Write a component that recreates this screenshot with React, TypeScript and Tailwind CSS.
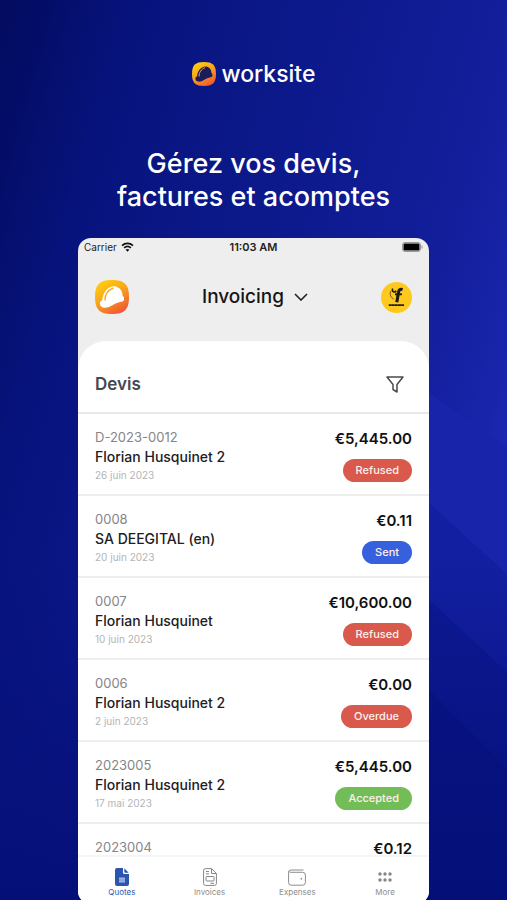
import React from "react";

type Status = "Refused" | "Sent" | "Overdue" | "Accepted";

interface Quote {
  number: string;
  client?: string;
  date?: string;
  amount: string;
  status?: Status;
}

const quotes: Quote[] = [
  { number: "D-2023-0012", client: "Florian Husquinet 2", date: "26 juin 2023", amount: "€5,445.00", status: "Refused" },
  { number: "0008", client: "SA DEEGITAL (en)", date: "20 juin 2023", amount: "€0.11", status: "Sent" },
  { number: "0007", client: "Florian Husquinet", date: "10 juin 2023", amount: "€10,600.00", status: "Refused" },
  { number: "0006", client: "Florian Husquinet 2", date: "2 juin 2023", amount: "€0.00", status: "Overdue" },
  { number: "2023005", client: "Florian Husquinet 2", date: "17 mai 2023", amount: "€5,445.00", status: "Accepted" },
  { number: "2023004", amount: "€0.12" },
];

const statusColor: Record<Status, string> = {
  Refused: "bg-[#d9594c]",
  Overdue: "bg-[#d9594c]",
  Sent: "bg-[#3660dc]",
  Accepted: "bg-[#73bd58]",
};

function HelmetLogo({ id, className, helmet }: { id: string; className: string; helmet: string }) {
  return (
    <svg viewBox="0 0 34 34" className={className} aria-hidden="true">
      <defs>
        <linearGradient id={id} x1="0.15" y1="0" x2="0.75" y2="1">
          <stop offset="0" stopColor="#fdd20b" />
          <stop offset="0.45" stopColor="#fba71c" />
          <stop offset="1" stopColor="#ee5436" />
        </linearGradient>
      </defs>
      <path d="M17 0C29 0 34 4 34 17S29 34 17 34 0 30 0 17 5 0 17 0Z" fill={`url(#${id})`} />
      <path
        d="M5 24C4.600 22 5.500 21.200 7.300 20.200C7.800 12.500 13 6.300 19.500 6.300C21 6.300 21.800 7 23 7.600C26 9 27.300 12 27.600 15.500C28.800 16.500 29.500 18.500 28.800 20.300C27.500 22.500 24 21.500 19.500 24C15.500 26.300 12.500 28.200 8.800 27.800C6.500 27.500 5.300 26 5 24Z"
        fill={helmet}
      />
      <path d="M10 20C10 14.500 13 10.300 18 8.200" fill="none" stroke="#fba91d" strokeWidth="1.400" strokeLinecap="round" />
    </svg>
  );
}

function Avatar() {
  return (
    <svg viewBox="0 0 32 32" className="size-[31px]" fill="none" stroke="#1c1b16" aria-hidden="true">
      <circle cx="16" cy="16" r="16" fill="#fec91f" stroke="none" />
      <path d="M22.300 7.800C19.500 7 18.500 8.300 18.100 10.500L16.300 20.800" strokeWidth="3.200" />
      <path d="M14.500 12.700H21.500" strokeWidth="2" />
      <path d="M12 6.800C11 9.800 13 11.500 15.800 9.300" strokeWidth="1.700" />
      <path d="M10 9.500C8.800 13 10 16 13 17.500" strokeWidth="0.700" />
      <path d="M8 23.800H24" strokeWidth="1.800" strokeDasharray="3 0.200" />
    </svg>
  );
}

function StatusBar() {
  return (
    <div className="flex h-5 shrink-0 items-center justify-between px-1.5 pb-0.5 text-[11px] text-[#222]">
      <div className="flex flex-1 items-center gap-1">
        <span className="text-[10px]">Carrier</span>
        <svg viewBox="0 0 14 11" className="h-[10px] w-[13px]" aria-hidden="true">
          <path d="M1 4C4.500 0.800 9.500 0.800 13 4" fill="none" stroke="#111" strokeWidth="2" />
          <path d="M3.300 6.500C5.500 4.500 8.500 4.500 10.700 6.500" fill="none" stroke="#111" strokeWidth="1.900" />
          <path d="M7 10.800L4.900 8.500C6.200 7.400 7.800 7.400 9.100 8.500Z" fill="#111" />
        </svg>
      </div>
      <span className="font-semibold">11:03 AM</span>
      <div className="flex flex-1 justify-end">
        <svg viewBox="0 0 21 10" className="h-[10px] w-[21px]" aria-hidden="true">
          <rect x="0.500" y="0.500" width="18" height="9" rx="2.500" fill="none" stroke="#999" />
          <rect x="1.500" y="1.500" width="16" height="7" rx="1.300" fill="#000" />
          <path d="M20 3.500V6.500" stroke="#999" />
        </svg>
      </div>
    </div>
  );
}

function QuoteRow({ quote }: { quote: Quote }) {
  return (
    <li className="flex h-[82px] shrink-0 justify-between border-b-2 border-[#eeeeef] pr-[17px] pl-[17px] last:h-auto last:border-b-0">
      <div className="pt-[15px]">
        <p className="text-[13px] leading-4 text-[#858588]">{quote.number}</p>
        {quote.client && <p className="pt-0.5 text-[14px] leading-5 font-medium text-[#202023]">{quote.client}</p>}
        {quote.date && <p className="text-[10px] leading-4 text-[#b4b4b6]">{quote.date}</p>}
      </div>
      <div className="flex flex-col items-end gap-3 pt-[17px]">
        <p className="text-[15px] leading-4 font-semibold text-[#111]">{quote.amount}</p>
        {quote.status && (
          <span className={`rounded-full px-[13px] text-[11px] leading-[23px] font-medium text-[#fff0ee] ${statusColor[quote.status]}`}>
            {quote.status}
          </span>
        )}
      </div>
    </li>
  );
}

function QuotesIcon() {
  return (
    <svg viewBox="0 0 14 18" className="h-[18px] w-[14px]" aria-hidden="true">
      <path d="M2 0H8V4.500Q8 6 9.500 6H14V16Q14 18 12 18H2Q0 18 0 16V2Q0 0 2 0Z" fill="#2c56ae" />
      <path d="M9.300 0.300L13.700 4.800H10.300Q9.300 4.800 9.300 3.800Z" fill="#2c56ae" />
      <path d="M4 9.500H10V14.500H4Z" fill="#9db3df" />
      <path d="M4 12H10" stroke="#6f8fcd" strokeWidth="0.800" />
    </svg>
  );
}

function InvoicesIcon() {
  return (
    <svg viewBox="0 0 14 18" className="h-[18px] w-[14px]" fill="none" stroke="#858585" aria-hidden="true">
      <path d="M2.500 0.600H8.500L13.400 5.500V15.500Q13.400 17.400 11.500 17.400H2.500Q0.600 17.400 0.600 15.500V2.500Q0.600 0.600 2.500 0.600Z" />
      <path d="M8.500 0.800V5.500H13.300M3 3.500H6M3 5.800H6" />
      <rect x="3" y="8.500" width="8" height="4.500" rx="0.800" />
      <path d="M7.500 15.300H11" />
    </svg>
  );
}

function ExpensesIcon() {
  return (
    <svg viewBox="0 0 18 17" className="h-[17px] w-[18px]" fill="none" stroke="#8c8c8c" aria-hidden="true">
      <path d="M15.500 1H3Q0.600 1 0.600 3.300V13.500Q0.600 16.200 3.300 16.200H14.700Q17.400 16.200 17.400 13.500V6Q17.400 3.300 14.700 3.300H2.500Q1 3.300 0.800 2.500" />
      <circle cx="13.300" cy="9.800" r="0.500" fill="#8c8c8c" />
    </svg>
  );
}

function MoreIcon() {
  return (
    <svg viewBox="0 0 14 10" className="h-[10px] w-[14px]" fill="#858585" aria-hidden="true">
      <circle cx="2" cy="2" r="1.700" />
      <circle cx="7" cy="2" r="1.700" />
      <circle cx="12" cy="2" r="1.700" />
      <circle cx="2" cy="8" r="1.700" />
      <circle cx="7" cy="8" r="1.700" />
      <circle cx="12" cy="8" r="1.700" />
    </svg>
  );
}

const tabs = [
  { label: "Quotes", icon: <QuotesIcon />, active: true },
  { label: "Invoices", icon: <InvoicesIcon />, active: false },
  { label: "Expenses", icon: <ExpensesIcon />, active: false },
  { label: "More", icon: <MoreIcon />, active: false },
];

function Backdrop() {
  return (
    <svg viewBox="0 0 507 900" preserveAspectRatio="none" className="absolute inset-0 -z-10 size-full" aria-hidden="true">
      <defs>
        <linearGradient id="backdrop" x1="0" y1="0" x2="1" y2="0.5">
          <stop offset="0" stopColor="#020b5e" />
          <stop offset="0.22" stopColor="#07137d" />
          <stop offset="0.45" stopColor="#0b1888" />
          <stop offset="0.8" stopColor="#121e9a" />
          <stop offset="1" stopColor="#1a27b0" />
        </linearGradient>
        <linearGradient id="shade" x1="0" y1="0" x2="0" y2="1">
          <stop offset="0" stopColor="#050f78" stopOpacity="0" />
          <stop offset="1" stopColor="#050f78" />
        </linearGradient>
      </defs>
      <rect width="507" height="900" fill="url(#backdrop)" />
      <path d="M429 393L507 447V900H429Z" fill="#1825ab" />
      <path d="M429 503L507 574V900H429Z" fill="#121fa0" />
      <path d="M429 600L507 672V900H429Z" fill="#0d1993" />
      <path d="M429 690L507 768V900H429Z" fill="#091588" />
      <rect y="560" width="507" height="340" fill="url(#shade)" />
    </svg>
  );
}

export default function App() {
  return (
    <main className="relative isolate flex h-screen flex-col overflow-hidden bg-[#0a168a] px-[78px] font-['Inter',sans-serif]">
      <Backdrop />

      <header className="flex flex-col items-center pt-[60px]">
        <div className="flex h-7 items-center gap-1.5 text-white">
          <HelmetLogo id="brandGradient" className="size-6" helmet="#1a1c5c" />
          <span className="text-[23px] leading-7 font-medium">worksite</span>
        </div>
        <h1 className="pt-[59px] text-center text-[27px] leading-[33px] font-medium whitespace-nowrap text-white">
          Gérez vos devis,
          <br />
          factures et acomptes
        </h1>
      </header>

      <section className="mt-[25px] -mb-1 flex min-h-0 flex-1 flex-col overflow-hidden rounded-[13px] bg-[#eeeeee]">
        <StatusBar />
        <div className="flex h-[83px] shrink-0 items-center justify-between px-[17px] pb-[5px]">
          <HelmetLogo id="appGradient" className="size-[34px]" helmet="#ffffff" />
          <button type="button" className="flex items-center gap-2.5 text-[19px] font-medium text-[#151515]">
            Invoicing
            <svg viewBox="0 0 14 8" className="h-2 w-3.5" fill="none" stroke="#222" strokeWidth="1.600" aria-hidden="true">
              <path d="M1 1L7 7L13 1" />
            </svg>
          </button>
          <button type="button" aria-label="Account">
            <Avatar />
          </button>
        </div>
        <div className="flex min-h-0 flex-1 flex-col rounded-t-[28px] bg-white">
          <div className="flex h-[73px] shrink-0 items-center justify-between border-b-2 border-[#e8e8e9] pt-4 pr-[25px] pl-[17px]">
            <h2 className="text-[17px] font-semibold text-[#47474f]">Devis</h2>
            <button type="button" aria-label="Filter">
              <svg viewBox="0 0 18 17" className="h-[17px] w-[18px]" fill="none" stroke="#4a4a50" strokeWidth="1.500" strokeLinejoin="round" aria-hidden="true">
                <path d="M1 1H17L11 8.500V16L7 13.500V8.500Z" />
              </svg>
            </button>
          </div>
          <ul className="flex min-h-0 flex-1 flex-col">
            {quotes.map((quote) => (
              <QuoteRow key={quote.number} quote={quote} />
            ))}
          </ul>
          <nav className="grid h-[49px] shrink-0 grid-cols-4 border-t-2 border-[#f5f5f5]">
            {tabs.map((tab) => (
              <a
                key={tab.label}
                href="#"
                aria-current={tab.active ? "page" : undefined}
                className={`flex flex-col items-center pt-2.5 text-[8px] leading-[10px] ${tab.active ? "text-[#2c56ae]" : "text-[#8e8e8e]"}`}
              >
                <span className="flex h-5 items-center">{tab.icon}</span>
                {tab.label}
              </a>
            ))}
          </nav>
        </div>
      </section>
    </main>
  );
}
